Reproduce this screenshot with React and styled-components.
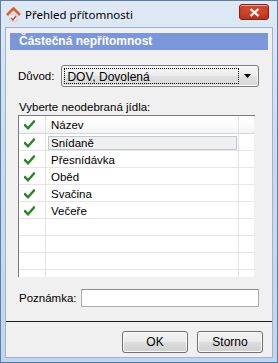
import React from "react";
import styled, { createGlobalStyle } from "styled-components";

const GlobalStyle = createGlobalStyle`
  html, body {
    margin: 0;
    padding: 0;
    background: #c8d9ee;
  }
  * {
    box-sizing: border-box;
  }
`;

const StyledWindow = styled.div`
  width: 278px;
  height: 363px;
  display: flex;
  flex-direction: column;
  background: linear-gradient(180deg, #dfe9f5 0%, #cbdcef 40%, #c2d5ec 100%);
  border: 1px solid #5d7ea8;
  border-bottom-color: #3f79b8;
  padding: 0 4px 4px 4px;
  font-family: "Liberation Sans", Arial, sans-serif;
  font-size: 11px;
  color: #000;
`;

const StyledTitleBar = styled.div`
  height: 26px;
  display: flex;
  align-items: center;
  padding-right: 4px;
`;

const StyledTitle = styled.span`
  flex: 1;
  margin-left: 3px;
  font-family: "Noto Sans", "Open Sans", sans-serif;
  font-size: 11.5px;
  color: #000;
`;

const StyledCloseButton = styled.span`
  display: flex;
  flex: none;
  align-items: center;
  justify-content: center;
  width: 30px;
  height: 16px;
  margin-top: -4px;
  border: 1px solid #7a2416;
  border-radius: 3px;
  background: #d0452b;
  box-shadow: inset 0 1px 0 #f0a898, inset 0 -3px 4px #b8301a;
`;

const StyledClient = styled.div`
  flex: 1;
  display: flex;
  flex-direction: column;
  background: #f0f0f0;
  border: 1px solid #9fb3cc;
  padding: 5px 4px 0 4px;
`;

const StyledHeading = styled.div`
  height: 17px;
  background: #7b97dc;
  color: #fff;
  font-weight: bold;
  font-size: 12px;
  line-height: 17px;
  padding-left: 9px;
`;

const StyledForm = styled.div`
  display: flex;
  flex-direction: column;
  padding: 0 9px 0 7px;
`;

const StyledRow = styled.div`
  display: flex;
  align-items: center;
  gap: ${({ gap }) => gap}px;
  margin-top: ${({ top }) => top}px;
`;

const StyledSelect = styled.div`
  flex: 1;
  height: 22px;
  border: 1px solid #7a7a7a;
  border-radius: 3px;
  background: linear-gradient(180deg, #f5f5f5 0%, #ececec 50%, #e0e0e0 51%, #d8d8d8 100%);
  display: flex;
  align-items: center;
  padding: 2px;
  box-shadow: inset 0 0 0 1px #fcfcfc;
`;

const StyledSelectText = styled.div`
  flex: 1;
  height: 100%;
  border: 1px dotted #000;
  padding-left: 2px;
  line-height: 16px;
  font-size: 12px;
`;

const StyledArrow = styled.div`
  width: 17px;
  display: flex;
  justify-content: center;
`;

const StyledLabel = styled.div`
  margin-top: ${({ top }) => top || 0}px;
  font-size: 11.5px;
  line-height: 13px;
  padding-left: ${({ indent }) => indent || 0}px;
`;

const StyledGrid = styled.div`
  margin: 1px 4px 0 1px;
  height: 162px;
  background: #fff;
  border-left: 1px solid #7d7d7d;
  border-top: 1px solid #7d7d7d;
  overflow: hidden;
`;

const StyledGridRow = styled.div`
  display: grid;
  grid-template-columns: 27px 193px 16px;
  height: ${({ header }) => (header ? 18 : 17)}px;
  background: ${({ header }) =>
    header ? "linear-gradient(180deg, #ffffff 0%, #fbfbfb 60%, #f1f2f4 100%)" : "#fff"};
  border-bottom: 1px solid ${({ header }) => (header ? "#d5d5d5" : "#e6e6e6")};
`;

const StyledCell = styled.div`
  display: flex;
  align-items: center;
  border-right: 1px solid ${({ last }) => (last ? "#f0f0f0" : "#e3e3e3")};
  padding-left: ${({ pad }) => pad || 0}px;
  font-size: 11.5px;
`;

const StyledNameCell = styled.div`
  display: flex;
  align-items: center;
  border-right: 1px solid #e3e3e3;
  padding: 2px 1px 1px 2px;
`;

const StyledName = styled.div`
  flex: 1;
  height: 100%;
  display: flex;
  align-items: center;
  padding-left: 2px;
  font-size: 11.5px;
  background: ${({ selected }) => (selected ? "#f0f0f0" : "transparent")};
  border: 1px solid ${({ selected }) => (selected ? "#bfc9d6" : "transparent")};
`;

const StyledNote = styled.input`
  flex: 1;
  min-width: 0;
  width: 0;
  height: 18px;
  border: 1px solid #abadb3;
  border-top-color: #8e8f8f;
  background: #fff;
  margin: 0;
  outline: none;
`;

const StyledSeparator = styled.div`
  margin: 14px -4px 0 -4px;
  height: 1px;
  background: #1e1e1e;
`;

const StyledButtons = styled.div`
  display: flex;
  justify-content: flex-end;
  gap: 9px;
  padding: 9px 5px 0 0;
`;

const StyledButton = styled.button`
  width: 66px;
  height: 22px;
  border: 1px solid #707070;
  border-radius: 3px;
  background: linear-gradient(180deg, #f2f2f2 0%, #ebebeb 48%, #dddddd 52%, #cfcfcf 100%);
  box-shadow: inset 0 0 0 1px #fafafa;
  font-family: "Liberation Sans", Arial, sans-serif;
  font-size: 12px;
  color: #000;
  padding: 0;
`;

function Check() {
  return (
    <svg width="11" height="10" viewBox="0 0 11 10">
      <path d="M1 5.2 L4 8.2 L10 1.5" fill="none" stroke="#2c852c" strokeWidth="2.4" strokeLinecap="square" />
    </svg>
  );
}

function AppIcon() {
  return (
    <svg width="17" height="17" viewBox="0 0 17 17">
      <path d="M2 9 L8.5 2.5 L15 9" fill="none" stroke="#e0602a" strokeWidth="2.6" strokeLinejoin="round" />
      <rect x="5" y="9" width="7" height="6" fill="#fff" stroke="#c9c9c9" />
      <path d="M6 12 L8 14 L11 10" fill="none" stroke="#d83b2a" strokeWidth="1.4" />
    </svg>
  );
}

const meals = ["Snídaně", "Přesnídávka", "Oběd", "Svačina", "Večeře"];

export default function App() {
  return (
    <>
      <GlobalStyle />
      <StyledWindow>
        <StyledTitleBar>
          <AppIcon />
          <StyledTitle>Přehled přítomnosti</StyledTitle>
          <StyledCloseButton>
            <svg width="11" height="9" viewBox="0 0 11 9">
              <path d="M1.5 1 L9.5 8 M9.5 1 L1.5 8" stroke="#fff" strokeWidth="2.2" />
            </svg>
          </StyledCloseButton>
        </StyledTitleBar>
        <StyledClient>
          <StyledHeading>Částečná nepřítomnost</StyledHeading>
          <StyledForm>
            <StyledRow top={15} gap={7}>
              <StyledLabel indent={1}>Důvod:</StyledLabel>
              <StyledSelect>
                <StyledSelectText>DOV, Dovolená</StyledSelectText>
                <StyledArrow>
                  <svg width="7" height="4" viewBox="0 0 7 4">
                    <path d="M0 0 H7 L3.5 4 Z" fill="#000" />
                  </svg>
                </StyledArrow>
              </StyledSelect>
            </StyledRow>
            <StyledLabel top={14} indent={2}>Vyberte neodebraná jídla:</StyledLabel>
            <StyledGrid>
              <StyledGridRow header>
                <StyledCell pad={5}>
                  <Check />
                </StyledCell>
                <StyledCell pad={5}>Název</StyledCell>
                <StyledCell last />
              </StyledGridRow>
              {meals.map((meal, i) => (
                <StyledGridRow key={meal}>
                  <StyledCell pad={5}>
                    <Check />
                  </StyledCell>
                  <StyledNameCell>
                    <StyledName selected={i === 0}>{meal}</StyledName>
                  </StyledNameCell>
                  <StyledCell last />
                </StyledGridRow>
              ))}
              {[0, 1, 2, 3].map((n) => (
                <StyledGridRow key={n}>
                  <StyledCell />
                  <StyledCell />
                  <StyledCell last />
                </StyledGridRow>
              ))}
            </StyledGrid>
            <StyledRow top={12} gap={4}>
              <StyledLabel indent={2}>Poznámka:</StyledLabel>
              <StyledNote />
            </StyledRow>
          </StyledForm>
          <StyledSeparator />
          <StyledButtons>
            <StyledButton>OK</StyledButton>
            <StyledButton>Storno</StyledButton>
          </StyledButtons>
        </StyledClient>
      </StyledWindow>
    </>
  );
}
